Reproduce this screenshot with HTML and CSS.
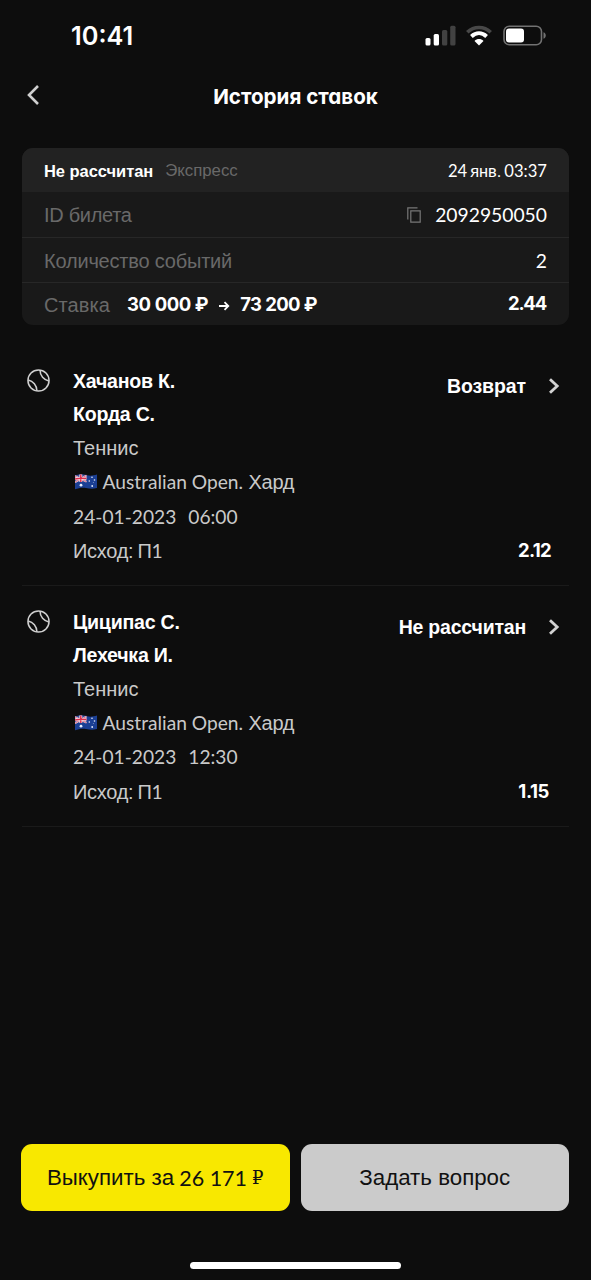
FILE: index.html
```html
<!DOCTYPE html>
<html lang="ru">
<head>
<meta charset="utf-8">
<title>История ставок</title>
<link rel="stylesheet" href="styles.css">
</head>
<body>
<svg class="defs" aria-hidden="true">
  <symbol id="ball" viewBox="0 0 24 24">
    <g fill="none" stroke="#cfcfcf" stroke-width="1.6">
      <circle cx="12" cy="12" r="11"/>
      <path d="M13.600 1.200C13.600 7 17.600 11.300 22.800 12.400M1.200 11.400C6.400 12.600 10.300 17 10.300 22.800"/>
    </g>
  </symbol>
  <symbol id="chevron" viewBox="0 0 12 18">
    <path d="M2 2.200L9.200 9L2 15.800" fill="none" stroke="#d2d2d2" stroke-width="2.800"/>
  </symbol>
  <symbol id="flag" viewBox="0 0 22 16">
    <path d="M0 1.500C5 0 8 .3 12 1.200S18 1.500 22 .6V14C18 15 15 14.800 11 14S4 14 0 15.200Z" fill="#1b3f94"/>
    <path d="M0 1.500C4 .3 8 .3 11.500 1.100V8C8 7.200 4 7.500 0 8.700Z" fill="#3c4f9e"/>
    <path d="M0 2L11.500 7.800M0 8.200L11.500 1.400" stroke="#f3dfe6" stroke-width="1.800"/>
    <path d="M0 2L11.500 7.800M0 8.200L11.500 1.400" stroke="#d8405c" stroke-width=".7"/>
    <path d="M5.800 .6V8M0 5C4 4 8 4 11.500 4.600" fill="none" stroke="#f7e8ec" stroke-width="2.800"/>
    <path d="M5.800 .6V8M0 5C4 4 8 4 11.500 4.600" fill="none" stroke="#dc2c4b" stroke-width="1.500"/>
    <g fill="#e8eefc"><circle cx="6" cy="11.200" r="1.400"/><circle cx="17" cy="3.300" r=".8"/><circle cx="14.300" cy="7" r=".8"/><circle cx="19.500" cy="6" r=".8"/><circle cx="17.200" cy="12" r=".9"/><circle cx="18.300" cy="8.600" r=".45"/></g>
  </symbol>
</svg>
<div class="screen">
  <header class="status">
    <span class="clock">10:41</span>
    <svg class="status-icons" viewBox="0 0 122 22">
      <rect x=".5" y="13" width="5" height="7.500" rx="1.500" fill="#fff"/>
      <rect x="8.700" y="9" width="5.300" height="11.500" rx="1.500" fill="#fff"/>
      <rect x="17" y="5" width="5.300" height="15.500" rx="1.500" fill="#424242"/>
      <rect x="25.200" y=".8" width="5.300" height="19.700" rx="1.500" fill="#424242"/>
      <g fill="none">
        <path d="M42.300 7.300C49 .8 59 .8 65.700 7.300" stroke="#484848" stroke-width="3.600"/>
        <path d="M46.400 11.500C51 7.200 57 7.200 61.600 11.500" stroke="#fff" stroke-width="3.900"/>
      </g>
      <path d="M54 20.600L49.500 15.900C52 13.500 56 13.500 58.500 15.900Z" fill="#fff"/>
      <rect x="79" y="1.200" width="37.500" height="18.600" rx="5.300" fill="none" stroke="#727272" stroke-width="1.600"/>
      <rect x="81" y="3.400" width="18" height="14.200" rx="3" fill="#fff"/>
      <path d="M118.500 7.200C121.500 8.400 121.500 12.600 118.500 13.800Z" fill="#727272"/>
    </svg>
  </header>
  <nav class="topbar">
    <svg class="back" viewBox="0 0 14 22"><path d="M12 2L3 11L12 20" fill="none" stroke="#cfcfcf" stroke-width="2.600"/></svg>
    <h1 class="title">История ставок</h1>
  </nav>

  <section class="ticket">
    <div class="row head">
      <span class="state">Не рассчитан</span><span class="kind">Экспресс</span>
      <span class="value date"><span class="num">24</span> <span class="cyr">янв.</span> <span class="num">03:37</span></span>
    </div>
    <div class="row">
      <span class="label id-label">ID билета</span>
      <span class="value">
        <svg class="copy" viewBox="0 0 14 16"><path d="M.8 12.500V.8H10.500M3.800 3.800H13.200V15.200H3.800Z" fill="none" stroke="#777" stroke-width="1.200"/></svg>
        <span class="num">2092950050</span>
      </span>
    </div>
    <div class="row">
      <span class="label count-label">Количество событий</span><span class="value num">2</span>
    </div>
    <div class="row stake">
      <span class="label stake-label">Ставка</span>
      <span class="sums"><span>30 000 ₽</span><svg class="arrow" viewBox="0 0 12 10"><path d="M1 5H10M6.500 1.200L10.300 5L6.500 8.800" fill="none" stroke="#fff" stroke-width="1.800"/></svg><span class="payout">73 200 ₽</span></span>
      <span class="value odds">2.44</span>
    </div>
  </section>

  <section class="event">
    <svg class="ball"><use href="#ball"/></svg>
    <div class="info">
      <div class="name">Хачанов К.</div>
      <div class="name">Корда С.</div>
      <div class="line sport">Теннис</div>
      <div class="line league"><svg class="flag"><use href="#flag"/></svg><span class="num">Australian Open.</span><span>Хард</span></div>
      <div class="line when num"><span>24-01-2023</span><span>06:00</span></div>
      <div class="line pick">Исход: П<span class="num">1</span></div>
    </div>
    <div class="side">
      <div class="result"><span class="refund">Возврат</span><svg class="chevron"><use href="#chevron"/></svg></div>
      <div class="odds">2.12</div>
    </div>
  </section>
  <section class="event">
    <svg class="ball"><use href="#ball"/></svg>
    <div class="info">
      <div class="name">Циципас С.</div>
      <div class="name">Лехечка И.</div>
      <div class="line sport">Теннис</div>
      <div class="line league"><svg class="flag"><use href="#flag"/></svg><span class="num">Australian Open.</span><span>Хард</span></div>
      <div class="line when num"><span>24-01-2023</span><span>12:30</span></div>
      <div class="line pick">Исход: П<span class="num">1</span></div>
    </div>
    <div class="side">
      <div class="result"><span>Не рассчитан</span><svg class="chevron"><use href="#chevron"/></svg></div>
      <div class="odds low">1.15</div>
    </div>
  </section>

  <footer class="actions">
    <button class="btn cashout"><span>Выкупить за</span><span class="num">26 171</span><span class="rub">₽</span></button>
    <button class="btn ask">Задать вопрос</button>
  </footer>
  <div class="home"></div>
</div>
</body>
</html>
```
FILE: styles.css
```css
* { box-sizing: border-box; }
body { margin: 0; background: #0d0d0d; }
.defs { display: none; }
.screen {
  width: 591px; height: 1280px; overflow: hidden;
  display: flex; flex-direction: column;
  background: #0d0d0d; color: #fff;
  font: 20px/24px "Liberation Sans", Arial, sans-serif;
  white-space: nowrap;
}
.num { font-family: Lato, sans-serif; font-size: 19.3px; letter-spacing: 0; }
.status { height: 72px; flex: none; display: flex; justify-content: space-between; align-items: center; padding: 0 44px 0 71px; }
.clock { font: 600 25.300px/28px Inter, sans-serif; letter-spacing: 0; }
.status-icons { width: 122px; height: 22px; margin-top: -1px; }
.topbar { height: 76px; flex: none; display: grid; grid-template-columns: 40px 1fr 40px; padding: 0 22px 0 22px; }
.back { width: 14px; height: 22px; margin: 12px 0 0 4px; }
.title { margin: 12px 0 0; font: 700 20.600px/25px Inter, sans-serif; font-feature-settings: "cv11"; text-align: center; }

.ticket { height: 177px; flex: none; margin: 0 22px; border-radius: 11px; background: #191919; overflow: hidden; }
.row { height: 45px; padding: 1px 22px 0; display: flex; align-items: center; border-bottom: 1px solid #272727; }
.row.head { height: 44px; background: #222; border: 0; font-size: 17px; }
.row.head + .row { height: 46px; }
.row.row.stake { height: 41px; border: 0; }
.state { font-weight: 700; font-size: 16.500px; letter-spacing: -.05px; }
.kind { margin-left: 12px; color: #696969; font-size: 16.800px; }
.label { color: #696969; letter-spacing: -.2px; }
.id-label { letter-spacing: -.3px; }
.stake-label { letter-spacing: .1px; margin-top: 2px; }
.value { margin-left: auto; display: flex; align-items: center; }
.date { gap: 3px; }
.date .num { font-size: 16.600px; }
.date .cyr { font-size: 16.400px; }
.copy { width: 14px; height: 16px; margin: -1px 14px 0 0; }
.sums { display: flex; align-items: center; margin-left: 17px; font: 700 18.500px/24px Inter, sans-serif; letter-spacing: -.4px; }
.payout { letter-spacing: -.6px; }
.arrow { width: 12px; height: 10px; margin: 3px 10px 0; }
.odds { font: 700 18.500px/24px Inter, sans-serif; letter-spacing: -.7px; }
.stake .odds { margin-top: -2px; letter-spacing: -1.200px; padding-right: 1px; }

.event { flex: none; display: flex; height: 240.500px; margin: 0 22px; padding-top: 20px; border-bottom: 1px solid #1a1a1a; }
.ticket + .event { height: 260.500px; padding-top: 40px; }
.event + .event { height: 241px; }
.ball { width: 23px; height: 23px; margin: 4px 23px 0 5px; }
.info { flex: 1; }
.name { height: 33px; line-height: 33px; font-weight: 700; font-size: 19.600px; letter-spacing: -.25px; }
.line { height: 34.500px; line-height: 34.500px; color: #c9c9c9; font-size: 20px; }
.sport { height: 34px; line-height: 34px; }
.league { display: flex; align-items: center; gap: 5.500px; letter-spacing: -.3px; }
.league .num { font-size: 19.200px; }
.flag { width: 22px; height: 16px; margin-left: 2px; }
.when { display: flex; gap: 12px; font-size: 19.200px; }
.pick { letter-spacing: -.3px; word-spacing: -1px; }
.side { display: flex; flex-direction: column; align-items: flex-end; justify-content: space-between; padding: 9px 9px 23px 0; }
.result { display: flex; align-items: center; gap: 22px; font-weight: 700; font-size: 19.500px; letter-spacing: -.2px; }
.refund { letter-spacing: -.1px; }
.chevron { width: 12px; height: 18px; }
.side .odds { margin-right: 9px; }
.side .odds.low { margin-right: 11px; letter-spacing: -.4px; }

.actions { flex: none; margin-top: auto; display: grid; grid-template-columns: 268.500px 268.500px; gap: 11px; padding: 0 21px; }
.btn { height: 67px; border: 0; border-radius: 11px; color: #111; font: 22.300px/26px "Liberation Sans", Arial, sans-serif; display: flex; align-items: center; justify-content: center; gap: 5px; padding: 0; }
.btn .num { font-size: 21.500px; }
.cashout { background: #f8e800; }
.ask { background: #cbcbcb; }
.btn .rub { font-family: "DejaVu Serif", serif; font-size: 18px; }
.home { flex: none; width: 211px; height: 7px; margin: 51px auto 11px 190px; border-radius: 4px; background: #fff; }
```
